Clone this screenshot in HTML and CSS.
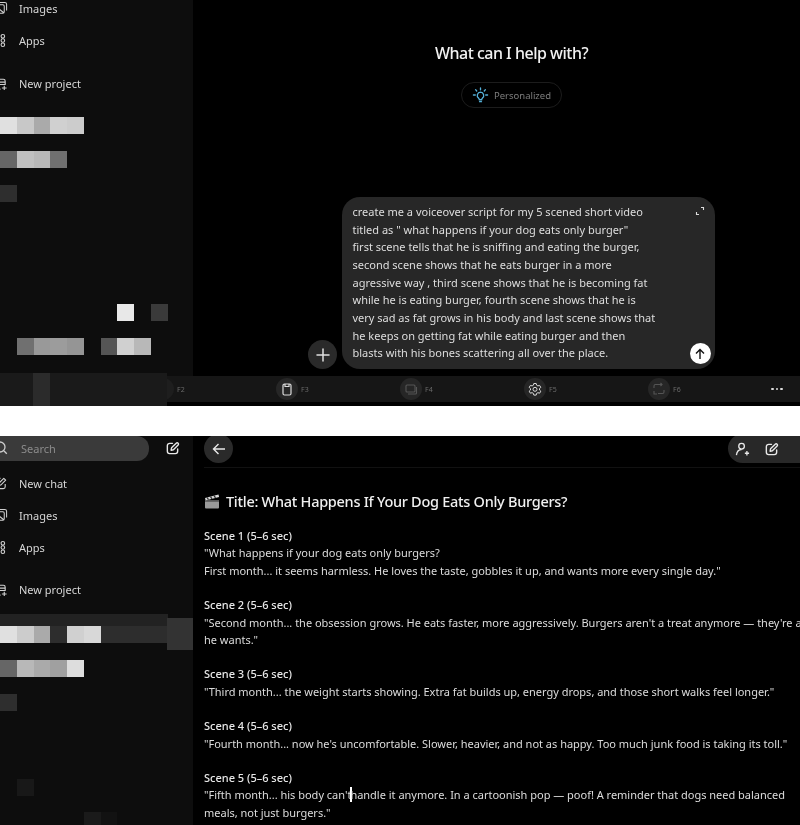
FILE: index.html
```html
<!DOCTYPE html>
<html lang="en">
<head>
<meta charset="utf-8">
<title>Chat screenshots</title>
<link rel="stylesheet" href="styles.css">
</head>
<body>
<svg class="defs" width="0" height="0" aria-hidden="true">
  <symbol id="i-edit" viewBox="0 0 16 16"><path d="M8 2.500H5A2.500 2.500 0 0 0 2.500 5v6A2.500 2.500 0 0 0 5 13.500h6a2.500 2.500 0 0 0 2.500-2.500V8.500M6.500 9.800l.5-2.500 5-5a1.200 1.200 0 0 1 2 2l-5 5z" fill="none" stroke="currentColor" stroke-width="1.500" stroke-linejoin="round" stroke-linecap="round"/></symbol>
  <symbol id="i-chat" viewBox="0 0 16 16"><path d="M8 2.500H4A2 2 0 0 0 2 4.500v7a2 2 0 0 0 2 2h7a2 2 0 0 0 2-2V8.500M6 10l.5-2.500 5-5 2 2-5 5z" fill="none" stroke="currentColor" stroke-width="1.200" stroke-linejoin="round"/></symbol>
  <symbol id="i-images" viewBox="0 0 16 16"><path d="M3 5.500A1.500 1.500 0 0 1 4.500 4h6A1.500 1.500 0 0 1 12 5.500v6a1.500 1.500 0 0 1-1.500 1.500h-6A1.500 1.500 0 0 1 3 11.500zM6 1.500h6.500A2 2 0 0 1 14.500 3.500V10M5.500 7.500a1 1 0 1 0 .01 0M3.500 12l3.500-3 4.500 3.500" fill="none" stroke="currentColor" stroke-width="1.100"/></symbol>
  <symbol id="i-apps" viewBox="0 0 16 16"><circle cx="10.500" cy="3.500" r="1.900" fill="none" stroke="currentColor" stroke-width="1.200"/><circle cx="10.500" cy="8" r="1.900" fill="none" stroke="currentColor" stroke-width="1.200"/><circle cx="10.500" cy="12.500" r="1.900" fill="none" stroke="currentColor" stroke-width="1.200"/></symbol>
  <symbol id="i-project" viewBox="0 0 16 16"><path d="M1 3.500h10a2 2 0 0 1 2 2V9H1M13 6.500H1M8 14H1M12 10.500v4.500M9.500 12.800h5" fill="none" stroke="currentColor" stroke-width="1.200"/></symbol>
</svg>

<section class="panel panel-top">
  <div class="panel-row">
    <aside class="sidebar sidebar-top">
      <nav class="nav nav-cut">
        <a class="nav-item"><svg class="nav-icon"><use href="#i-images"/></svg>Images</a>
        <a class="nav-item"><svg class="nav-icon"><use href="#i-apps"/></svg>Apps</a>
        <a class="nav-item nav-gap"><svg class="nav-icon"><use href="#i-project"/></svg>New project</a>
      </nav>
      <div class="mosaic mosaic-a">
        <div class="m-row"><i class="c s-e0"></i><i class="c s-c8"></i><i class="c s-aa"></i><i class="c s-d0"></i><i class="c s-cc"></i></div>
        <div class="m-row m-gap"><i class="c s-66"></i><i class="c s-c0"></i><i class="c s-b8"></i><i class="c s-70"></i></div>
        <div class="m-row m-gap"><i class="c s-2e"></i></div>
      </div>
      <div class="mosaic mosaic-b">
        <div class="m-row"><i class="c"></i><i class="c"></i><i class="c"></i><i class="c"></i><i class="c"></i><i class="c"></i><i class="c"></i><i class="c s-e8"></i><i class="c"></i><i class="c s-3a"></i></div>
        <div class="m-row m-gap"><i class="c"></i><i class="c s-70"></i><i class="c s-99"></i><i class="c s-9c"></i><i class="c s-95"></i><i class="c"></i><i class="c s-55"></i><i class="c s-d0"></i><i class="c s-b8"></i></div>
      </div>
    </aside>
    <main class="home">
      <h1 class="home-title">What can I help with?</h1>
      <div class="pill">
        <svg class="bulb" viewBox="0 0 18 18"><path d="M9 5.500a3.500 3.500 0 0 0-2 6.300c.5.400.7 1 .8 1.700h2.400c.1-.7.300-1.300.8-1.700a3.500 3.500 0 0 0-2-6.300zM8 15.500h2M9 1v2M3.800 2.800l1.200 1.400M14.200 2.800L13 4.200M1.500 8.500h2M14.500 8.500h2" fill="none" stroke="#55b0d8" stroke-width="1.400" stroke-linecap="round"/></svg>
        <span>Personalized</span>
      </div>
      <div class="composer-row">
        <button class="plus"><svg viewBox="0 0 14 14" width="14" height="14"><path d="M7 1v12M1 7h12" stroke="#e0e0e0" stroke-width="1.500" stroke-linecap="round"/></svg></button>
        <div class="composer">
          <p class="prompt">create me a voiceover script for my 5 scened short video<br>titled as " what happens if your dog eats only burger"<br>first scene tells that he is sniffing and eating the burger,<br>second scene shows that he eats burger in a more<br>agressive way , third scene shows that he is becoming fat<br>while he is eating burger, fourth scene shows that he is<br>very sad as fat grows in his body and last scene shows that<br>he keeps on getting fat while eating burger and then<br>blasts with his bones scattering all over the place.</p>
          <svg class="expand" viewBox="0 0 10 10"><path d="M6 1.500h2.500V4M1.500 6v2.500H4" fill="none" stroke="#ddd" stroke-width="1.100"/></svg>
          <button class="send"><svg viewBox="0 0 12 12" width="12" height="12"><path d="M6 11V1.500M2 5.500l4-4 4 4" fill="none" stroke="#111" stroke-width="1.400"/></svg></button>
        </div>
      </div>
    </main>
  </div>
  <div class="foot-row">
    <div class="foot-strip"><i class="foot-cell"></i></div>
    <div class="fbar">
      <div class="fkey"><span class="fcirc fcirc-f2"><svg viewBox="0 0 14 14" width="14" height="14"><path d="M5.500 2.500c2 1 2 8 0 9" fill="none" stroke="#ccc" stroke-width="1.300"/></svg></span><span class="flabel">F2</span></div>
      <div class="fkey"><span class="fcirc"><svg viewBox="0 0 14 14" width="14" height="14"><path d="M3 3.500A1.500 1.500 0 0 1 4.500 2h5A1.500 1.500 0 0 1 11 3.500v8A1.500 1.500 0 0 1 9.500 13h-5A1.500 1.500 0 0 1 3 11.500zM5 2v2.500h4V2" fill="none" stroke="#ddd" stroke-width="1.200"/></svg></span><span class="flabel">F3</span></div>
      <div class="fkey"><span class="fcirc"><svg viewBox="0 0 14 14" width="14" height="14"><path d="M2 4a1 1 0 0 1 1-1h7a1 1 0 0 1 1 1v5a1 1 0 0 1-1 1H3a1 1 0 0 1-1-1zM12.500 5v6a1 1 0 0 1-1 1H4" fill="none" stroke="#555" stroke-width="1.100"/></svg></span><span class="flabel">F4</span></div>
      <div class="fkey"><span class="fcirc"><svg viewBox="0 0 14 14" width="14" height="14"><path d="M5.800 1.500h2.400l.4 1.700 1.300.7 1.700-.5 1.200 2-1.300 1.200v1.400l1.300 1.200-1.200 2-1.700-.5-1.300.7-.4 1.700H5.800l-.4-1.700-1.300-.7-1.700.5-1.200-2 1.300-1.200V6.600L1.200 5.400l1.200-2 1.700.5 1.300-.7z" fill="none" stroke="#ddd" stroke-width="1"/><circle cx="7" cy="7.300" r="2" fill="none" stroke="#ddd" stroke-width="1"/></svg></span><span class="flabel">F5</span></div>
      <div class="fkey"><span class="fcirc"><svg viewBox="0 0 14 14" width="14" height="14"><path d="M2 6V4a1.500 1.500 0 0 1 1.500-1.500H10M8.500 1l1.500 1.500L8.500 4M12 8v2a1.500 1.500 0 0 1-1.500 1.500H6M2 9v3h3" fill="none" stroke="#555" stroke-width="1.100"/></svg></span><span class="flabel">F6</span></div>
      <div class="dots"><i></i><i></i><i></i></div>
    </div>
  </div>
</section>

<section class="panel panel-bottom">
  <aside class="sidebar sidebar-bottom">
    <div class="search-row">
      <div class="search"><svg class="search-icon" viewBox="0 0 16 16"><circle cx="6" cy="7" r="5" fill="none" stroke="#ccc" stroke-width="1.300"/><path d="M9.800 10.800l3 3" stroke="#ccc" stroke-width="1.300"/></svg><span>Search</span></div>
      <svg class="search-edit"><use href="#i-edit"/></svg>
    </div>
    <nav class="nav">
      <a class="nav-item"><svg class="nav-icon"><use href="#i-chat"/></svg>New chat</a>
      <a class="nav-item"><svg class="nav-icon"><use href="#i-images"/></svg>Images</a>
      <a class="nav-item"><svg class="nav-icon"><use href="#i-apps"/></svg>Apps</a>
      <a class="nav-item nav-gap-low"><svg class="nav-icon"><use href="#i-project"/></svg>New project</a>
    </nav>
    <div class="band">
      <div class="m-row m-fill"><i class="c s-e0"></i><i class="c s-cc"></i><i class="c s-aa"></i><i class="c"></i><i class="c s-d0"></i><i class="c s-d8"></i></div>
      <i class="band-side"></i>
    </div>
    <div class="m-row m-gap"><i class="c s-66"></i><i class="c s-b8"></i><i class="c s-aa"></i><i class="c s-a0"></i><i class="c s-dd"></i></div>
    <div class="m-row m-gap"><i class="c s-2e"></i></div>
    <div class="m-row m-low"><i class="c"></i><i class="c s-18"></i></div>
    <div class="m-row m-low2"><i class="c"></i><i class="c"></i><i class="c"></i><i class="c"></i><i class="c"></i><i class="c s-1a"></i><i class="c s-12"></i></div>
  </aside>
  <main class="chat">
    <header class="chat-head">
      <button class="back"><svg viewBox="0 0 14 14" width="14" height="14"><path d="M13 7H1.500M6.500 2l-5 5 5 5" fill="none" stroke="#e8e8e8" stroke-width="1.400"/></svg></button>
      <div class="actions">
        <svg class="act-icon" viewBox="0 0 16 16"><circle cx="7" cy="4.500" r="3" fill="none" stroke="#e8e8e8" stroke-width="1.400"/><path d="M1.500 14c.5-3.500 2.500-6 5.500-6M10.500 12h4.500M12.700 9.700v4.600" fill="none" stroke="#e8e8e8" stroke-width="1.400"/></svg>
        <svg class="act-icon act-edit"><use href="#i-edit"/></svg>
      </div>
    </header>
    <article class="answer">
      <h2 class="answer-title"><svg class="clapper" viewBox="0 0 16 14"><path d="M1 6h14v7a1 1 0 0 1-1 1H2a1 1 0 0 1-1-1z" fill="#9a9a9a"/><path d="M1 3.500L14.500 0l.6 2.500L1.600 6z" fill="#d8d8d8"/><path d="M3 3l1.500 2.200M6.500 2.100L8 4.300M10 1.200l1.500 2.200" stroke="#333" stroke-width="1.300"/><path d="M1 6h14v1.500H1z" fill="#666"/></svg>Title: What Happens If Your Dog Eats Only Burgers?</h2>
      <h3 class="scene">Scene 1 (5–6 sec)</h3>
      <p class="line">"What happens if your dog eats only burgers?<br>First month... it seems harmless. He loves the taste, gobbles it up, and wants more every single day."</p>
      <h3 class="scene">Scene 2 (5–6 sec)</h3>
      <p class="line">"Second month... the obsession grows. He eats faster, more aggressively. Burgers aren't a treat anymore — they're all he wants."</p>
      <h3 class="scene">Scene 3 (5–6 sec)</h3>
      <p class="line">"Third month... the weight starts showing. Extra fat builds up, energy drops, and those short walks feel longer."</p>
      <h3 class="scene">Scene 4 (5–6 sec)</h3>
      <p class="line">"Fourth month... now he's uncomfortable. Slower, heavier, and not as happy. Too much junk food is taking its toll."</p>
      <h3 class="scene">Scene 5 (5–6 sec)</h3>
      <p class="line">"Fifth month... his body can't<i class="caret"></i>handle it anymore. In a cartoonish pop — poof! A reminder that dogs need balanced meals, not just burgers."</p>
    </article>
  </main>
</section>
</body>
</html>
```
FILE: styles.css
```css
* { box-sizing: border-box; margin: 0; padding: 0; }
html, body { width: 800px; height: 825px; overflow: hidden; background: #fff; }
body { font-family: "Noto Sans", "Open Sans", sans-serif; color: #e4e4e4; font-size: 11px; }
.defs { display: block; height: 0; }
button { border: 0; font: inherit; color: inherit; }

.panel { width: 800px; overflow: hidden; background: #000; filter: blur(.35px); }
.panel-top { height: 406px; margin-bottom: 30px; display: flex; flex-direction: column; }
.panel-bottom { height: 389px; display: flex; }
.panel-row { display: flex; height: 376px; flex: none; }

.sidebar { width: 193px; flex: none; background: #0d0d0d; }

.nav-cut { margin-top: -8px; }
.nav-item { display: flex; align-items: center; gap: 11px; height: 32px; margin-left: -7px; color: #d6d6d6; }
.nav-gap { margin-top: 11px; }
.nav-gap-low { margin-top: 10px; }
.nav-icon { width: 15px; height: 15px; flex: none; color: #d0d0d0; }

.mosaic-a { margin-top: 18px; }
.mosaic-b { margin-top: 102px; }
.m-row { display: flex; height: 17px; width: 167.500px; }
.m-gap { margin-top: 17px; }
.c { width: 16.750px; height: 17px; flex: none; }
.s-e0 { background: #e0e0e0; } .s-c8 { background: #c8c8c8; } .s-aa { background: #aaa; }
.s-d0 { background: #d0d0d0; } .s-cc { background: #ccc; } .s-66 { background: #666; }
.s-c0 { background: #c0c0c0; } .s-b8 { background: #b8b8b8; } .s-70 { background: #707070; }
.s-2e { background: #2e2e2e; } .s-e8 { background: #e8e8e8; } .s-3a { background: #3a3a3a; }
.s-99 { background: #999; } .s-9c { background: #9c9c9c; } .s-95 { background: #959595; }
.s-55 { background: #555; } .s-d8 { background: #d8d8d8; } .s-a0 { background: #a0a0a0; }
.s-dd { background: #ddd; } .s-18 { background: #181818; } .s-1a { background: #1a1a1a; }
.s-12 { background: #121212; }

.home { flex: 1; padding: 41px 0 0 30px; display: flex; flex-direction: column; align-items: center; }
.home-title { font-size: 16px; font-weight: 500; line-height: 24px; letter-spacing: -.5px; color: #f2f2f2; }
.pill { margin-top: 17px; height: 26px; width: 101px; border: 1px solid #1c1c1c; border-radius: 13px; display: flex; align-items: center; justify-content: center; gap: 5px; font-size: 9.500px; color: #7d7d7d; }
.bulb { width: 17px; height: 17px; flex: none; }
.composer-row { margin-top: 89px; display: flex; align-items: flex-end; gap: 5px; width: 407px; }
.plus { width: 29px; height: 29px; border-radius: 50%; background: #2a2a2a; display: flex; align-items: center; justify-content: center; flex: none; }
.composer { position: relative; flex: 1; height: 172px; background: #272727; border-radius: 18px; padding: 6px 10px 6px 10.500px; }
.prompt { line-height: 17.670px; white-space: nowrap; color: #dedede; }
.expand { position: absolute; top: 9px; right: 10px; width: 10px; height: 10px; }
.send { position: absolute; right: 4.500px; bottom: 5px; width: 21px; height: 21px; border-radius: 50%; background: #fff; display: flex; align-items: center; justify-content: center; }

.foot-row { display: flex; height: 30px; flex: none; }
.foot-strip { width: 167px; height: 33px; margin-top: -3px; background: #1a1a1a; position: relative; padding-left: 33px; flex: none; }
.foot-cell { display: block; width: 17px; height: 33px; background: #2b2b2b; }
.fbar { flex: 1; height: 26px; background: #161616; display: flex; align-items: center; }
.fkey { width: 124px; display: flex; align-items: center; gap: 3px; flex: none; margin-left: -15px; margin-right: 15px; }
.fcirc { width: 22px; height: 22px; border-radius: 50%; background: #262626; display: flex; align-items: center; justify-content: center; flex: none; }
.fcirc-f2 { background: #1e1e1e; }
.flabel { font-size: 7px; color: #6a6a6a; }
.dots { display: flex; gap: 2px; margin-left: -16px; }
.dots i { width: 2.500px; height: 2.500px; border-radius: 50%; background: #ddd; }

.search-row { display: flex; align-items: center; height: 25px; }
.search { width: 149px; height: 25px; background: #3a3a3a; border-radius: 0 12px 12px 0; display: flex; align-items: center; gap: 11px; padding-bottom: 1px; color: #8c8c8c; }
.search-icon { width: 16px; height: 16px; margin-left: -6px; flex: none; }
.search-edit { width: 15px; height: 15px; margin-left: 16px; margin-bottom: 1px; color: #e8e8e8; }
.sidebar-bottom .nav { margin-top: 6px; }
.band { position: relative; margin-top: 9px; width: 167.500px; height: 29px; background: #222; padding-top: 12px; }
.m-fill { background: #2d2d2d; }
.band-side { position: absolute; left: 167px; top: 4px; width: 26px; height: 32px; background: #333; }
.m-low { margin-top: 68px; }
.m-low2 { margin-top: 16px; }

.chat { flex: 1; min-width: 0; overflow: hidden; padding-left: 11px; }
.chat-head { display: flex; justify-content: space-between; height: 32px; border-bottom: 1px solid #111; }
.back { width: 29px; height: 29px; margin-top: -2px; border-radius: 50%; background: #2a2a2a; display: flex; align-items: center; justify-content: center; padding-top: 1px; }
.actions { width: 72px; height: 29px; margin-top: -2px; background: #282828; border-radius: 15px 0 0 15px; display: flex; align-items: center; gap: 14px; padding: 1px 0 0 7px; }
.act-icon { width: 15px; height: 15px; color: #e8e8e8; flex: none; }
.answer { width: 606px; padding-top: 21px; }
.answer-title { display: flex; align-items: center; gap: 6px; font-size: 14.500px; font-weight: 500; line-height: 24px; letter-spacing: -.28px; color: #f0f0f0; white-space: nowrap; }
.clapper { width: 16px; height: 15px; flex: none; }
.scene { font-size: 11px; font-weight: 500; line-height: 17.400px; color: #e8e8e8; margin-top: 17px; }
.answer-title + .scene { margin-top: 14px; }
.line { line-height: 17.400px; letter-spacing: -.01px; color: #dcdcdc; }
.caret { display: inline-block; width: 2px; height: 15px; margin: 0 -2px 0 -1px; background: #fff; vertical-align: -3px; }
```
